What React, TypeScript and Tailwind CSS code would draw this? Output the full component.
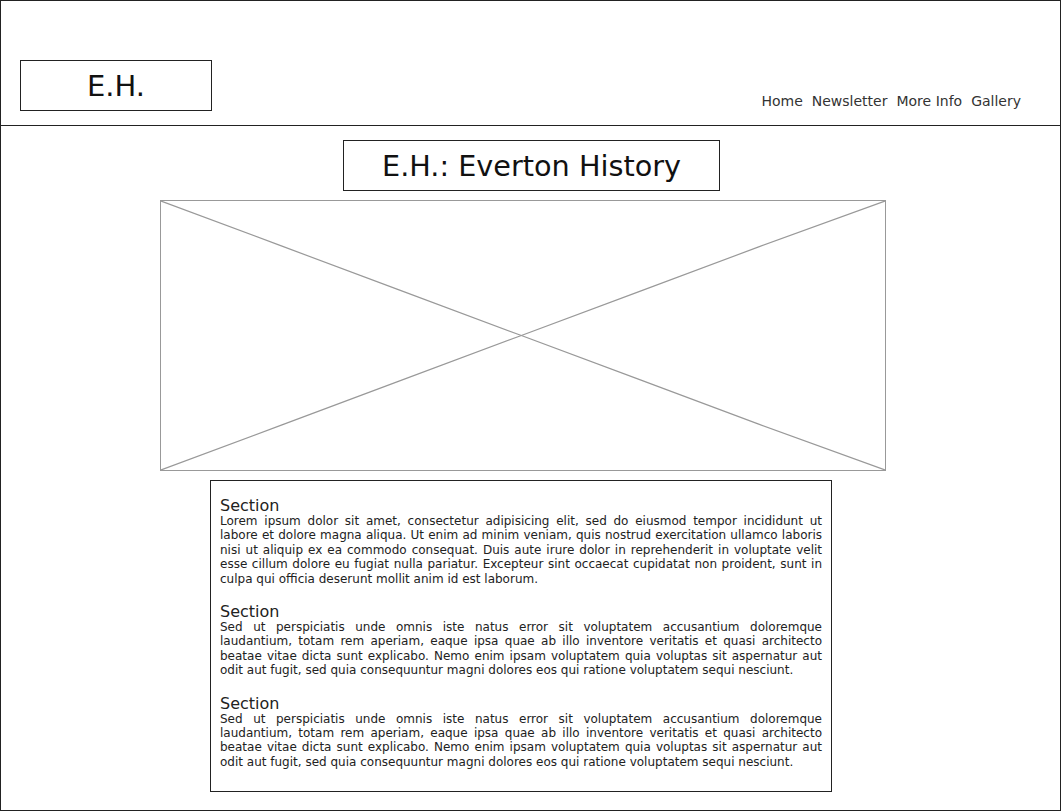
const LOREM =
  "Lorem ipsum dolor sit amet, consectetur adipisicing elit, sed do eiusmod tempor incididunt ut labore et dolore magna aliqua. Ut enim ad minim veniam, quis nostrud exercitation ullamco laboris nisi ut aliquip ex ea commodo consequat. Duis aute irure dolor in reprehenderit in voluptate velit esse cillum dolore eu fugiat nulla pariatur. Excepteur sint occaecat cupidatat non proident, sunt in culpa qui officia deserunt mollit anim id est laborum."

const SED =
  "Sed ut perspiciatis unde omnis iste natus error sit voluptatem accusantium doloremque laudantium, totam rem aperiam, eaque ipsa quae ab illo inventore veritatis et quasi architecto beatae vitae dicta sunt explicabo. Nemo enim ipsam voluptatem quia voluptas sit aspernatur aut odit aut fugit, sed quia consequuntur magni dolores eos qui ratione voluptatem sequi nesciunt."

const sections = [LOREM, SED, SED]

const navItems = ["Home", "Newsletter", "More Info", "Gallery"]

function Section({ text }: { text: string }) {
  return (
    <div>
      <h2 className="text-[16px] leading-[17px] text-[#222]">Section</h2>
      <p className="text-[12px] leading-[14.4px] text-justify text-[#222]">{text}</p>
    </div>
  )
}

export default function App() {
  return (
    <div
      className="w-[1061px] h-[811px] border border-[#222] bg-white flex flex-col overflow-hidden"
      style={{ fontFamily: '"DejaVu Sans", Verdana, sans-serif' }}
    >
      {/* header */}
      <header className="h-[125px] shrink-0 border-b border-[#222] flex items-end justify-between pl-[19px] pr-[39px] pb-[14px]">
        <div className="w-[192px] h-[51px] border border-[#222] flex items-center justify-center pt-[2px]">
          <span className="text-[29px] leading-none text-[#111]">E.H.</span>
        </div>
        <nav className="flex gap-[9px] text-[14px] leading-[18px] text-[#333] pb-[1px]">
          {navItems.map((item) => (
            <span key={item}>{item}</span>
          ))}
        </nav>
      </header>

      {/* main */}
      <main className="flex flex-col items-start pt-[14px]">
        <div className="ml-[342px] w-[377px] h-[51px] border border-[#222] flex items-center justify-center pt-[2px]">
          <h1 className="text-[28.7px] leading-none text-[#111]">E.H.: Everton History</h1>
        </div>

        <div className="ml-[159px] mt-[9px] w-[726px] h-[271px] border border-[#999] relative">
          <svg className="absolute inset-0 w-full h-full" viewBox="0 0 726 271" preserveAspectRatio="none">
            <path d="M0 0 L120 45 L240 90 L360 135 L480 180 L600 225 L726 271" stroke="#999" strokeWidth="1.2" fill="none" />
            <path d="M0 271 L120 226 L240 181 L360 136 L480 91 L600 46 L726 0" stroke="#999" strokeWidth="1.2" fill="none" />
          </svg>
        </div>

        <div className="ml-[209px] mt-[9px] w-[622px] h-[312px] border border-[#222] pl-[9px] pr-[9px] pt-[16px] flex flex-col gap-[17px]">
          {sections.map((s, i) => (
            <Section key={i} text={s} />
          ))}
        </div>
      </main>
    </div>
  )
}
